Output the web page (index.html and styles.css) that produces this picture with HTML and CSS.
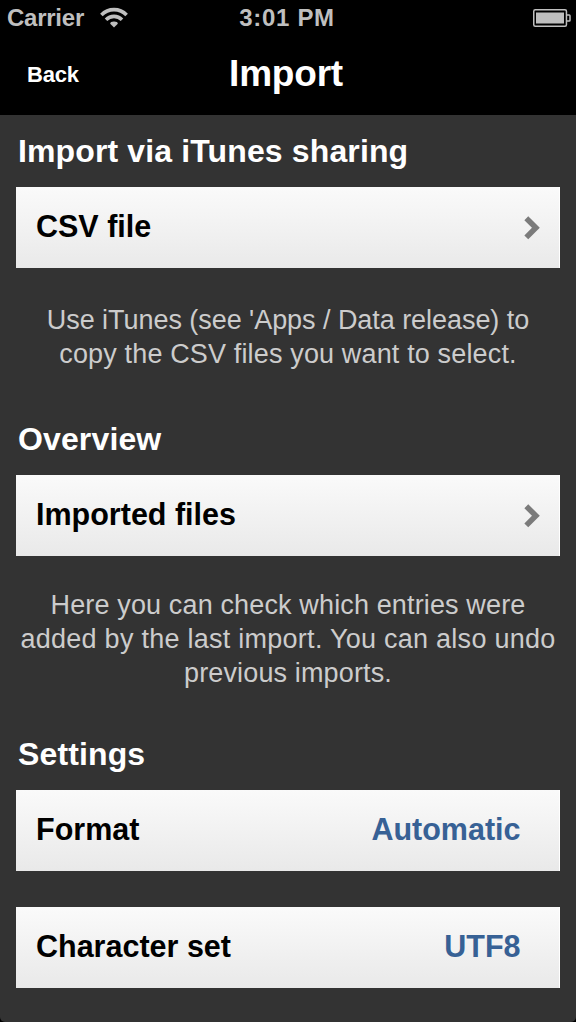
FILE: index.html
```html
<!DOCTYPE html>
<html lang="en">
<head>
    <meta charset="UTF-8">
    <meta name="viewport" content="width=device-width, initial-scale=1.0">
    <title>Import</title>
    <link rel="stylesheet" href="styles.css">
</head>
<body>

<div class="screen">
    <header class="header">
        <div class="status">
            <div class="carrier">
                <span class="carrier-name">Carrier</span>
                <svg class="wifi" width="28" height="21" viewBox="0 0 28 21">
                    <g fill="none" stroke="#bfbfbf" stroke-width="3.6">
                        <path d="M1.4 7.9a17.6 17.6 0 0 1 25.2 0"/>
                        <path d="M6 12.7a11.4 11.4 0 0 1 16 0"/>
                    </g>
                    <path d="M14 20.6l-3.8-3.8q0-2.2 3.8-2.2t3.8 2.2z" fill="#bfbfbf"/>
                </svg>
            </div>
            <span class="time">3:01 PM</span>
            <svg class="battery" width="38" height="18" viewBox="0 0 38 18">
                <rect x="0.75" y="0.75" width="32.7" height="16.5" rx="1.5" fill="none" stroke="#bfbfbf" stroke-width="1.5"/>
                <rect x="3" y="3.5" width="28" height="11" fill="#bfbfbf"/>
                <path d="M34 6h2.2q.8 0 .8.8v4.4q0 .8-.8.8H34" fill="none" stroke="#bfbfbf" stroke-width="1.5"/>
            </svg>
        </div>
        <nav class="navbar">
            <a class="back">Back</a>
            <h1>Import</h1>
        </nav>
    </header>

    <main class="content">
        <h2>Import via iTunes sharing</h2>
        <div class="row">
            <span class="label">CSV file</span>
            <svg class="arrow" width="16" height="24" viewBox="0 0 16 24">
                <path d="M2.3 2.2l9.6 9.6-9.6 9.6" fill="none" stroke="#7b7b7b" stroke-width="5.5"/>
            </svg>
        </div>
        <p class="note note-short">Use iTunes (see 'Apps / Data release) to<br><span class="wide">copy the CSV files you want to select.</span></p>

        <h2>Overview</h2>
        <div class="row">
            <span class="label">Imported files</span>
            <svg class="arrow" width="16" height="24" viewBox="0 0 16 24">
                <path d="M2.3 2.2l9.6 9.6-9.6 9.6" fill="none" stroke="#7b7b7b" stroke-width="5.5"/>
            </svg>
        </div>
        <p class="note note-long">Here you can check which entries were<br><span class="wider">added by the last import. You can also undo</span><br>previous imports.</p>

        <h2>Settings</h2>
        <div class="row">
            <span class="label">Format</span>
            <span class="value">Automatic</span>
        </div>
        <div class="row row-next">
            <span class="label">Character set</span>
            <span class="value">UTF8</span>
        </div>
    </main>
</div>

</body>
</html>
```
FILE: styles.css
```css
body {
    margin: 0;
    background-color: #000;
    font-family: "Liberation Sans", Arial, Helvetica, sans-serif;
}
.screen {
    width: 576px;
    height: 1022px;
    overflow: hidden;
    background-color: #333;
    border-radius: 0 0 5px 5px;
}
.header {
    height: 115px;
    background-color: #000;
}
.status {
    display: grid;
    grid-template-columns: 1fr auto 1fr;
    align-items: center;
    height: 35px;
    padding: 0 5px 0 7px;
    color: #bfbfbf;
    font-size: 24px;
    font-weight: bold;
}
.carrier {
    display: flex;
    align-items: center;
    gap: 16px;
}
.carrier-name {
    letter-spacing: -0.25px;
}
.wifi {
    margin-bottom: 1px;
}
.time {
    margin-right: 4px;
    letter-spacing: 0.7px;
}
.battery {
    justify-self: end;
}
.navbar {
    display: grid;
    grid-template-columns: 1fr auto 1fr;
    align-items: center;
    height: 80px;
    color: #fff;
}
.back {
    padding-left: 27px;
    font-size: 22px;
    font-weight: bold;
    letter-spacing: -0.2px;
}
h1 {
    margin: 0 4px 2px 0;
    font-size: 37px;
    line-height: 76px;
    letter-spacing: -0.2px;
}
h2 {
    margin: 0;
    padding-left: 18px;
    color: #fff;
    font-size: 32px;
    line-height: 72px;
    letter-spacing: 0.13px;
}
.row {
    display: flex;
    justify-content: space-between;
    align-items: center;
    box-sizing: border-box;
    height: 81px;
    margin: 0 16px;
    padding: 0 19px 0 20px;
    background: linear-gradient(#fafafa, #e9e9e9);
    border-right: 1px solid #fff;
    font-size: 30.5px;
    font-weight: bold;
}
.row-next {
    margin-top: 36px;
}
.label, .value {
    padding-bottom: 3px;
}
.value {
    padding-right: 19.5px;
    color: #376195;
}
.note {
    box-sizing: border-box;
    margin: 0;
    color: #ccc;
    font-size: 27px;
    line-height: 34px;
    text-align: center;
}
.note-short {
    height: 135px;
    padding-top: 35px;
    letter-spacing: -0.05px;
}
.note-long {
    height: 162px;
    padding-top: 32px;
    letter-spacing: 0.14px;
}
.wide {
    letter-spacing: 0.15px;
}
.wider {
    letter-spacing: 0.26px;
}
```
